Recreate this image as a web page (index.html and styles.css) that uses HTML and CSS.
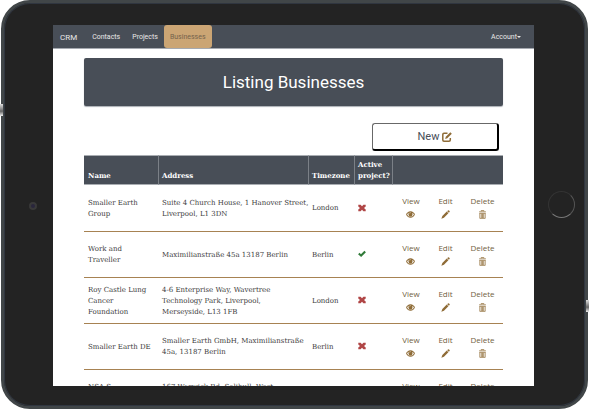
FILE: index.html
```html
<!DOCTYPE html>
<html lang="en">
<head>
<meta charset="utf-8">
<meta name="viewport" content="width=device-width">
<title>Listing Businesses</title>
<link rel="stylesheet" href="styles.css">
</head>
<body>
<svg class="symbols" aria-hidden="true">
  <symbol id="eye" viewBox="0 0 10 8"><path d="M5 .3C2.600 .3 .9 2 .1 4 .9 6 2.600 7.700 5 7.700S9.100 6 9.900 4C9.100 2 7.400 .3 5 .3Z"/><path fill="#fff" d="M1.200 4Q2 2.500 2.900 2Q2.400 4 3.300 5.600Q5 6.700 6.700 5.600Q7.600 4 7.100 2Q8 2.500 8.800 4Q7.500 6.500 5 6.500T1.200 4Z"/><path fill="#fff" d="M3.800 2.700Q4.200 1.700 5 1.600V2.300Q4.400 2.500 4.200 3Z"/></symbol>
  <symbol id="pencil" viewBox="0 0 10 10"><path d="M7.700 .5Q8.300 0 8.900 .5L9.500 1.100Q10 1.700 9.500 2.300L8.700 3.100 6.900 1.300ZM6.400 1.800 8.200 3.600 3.300 8.500 .4 9.600 1.500 6.700Z"/></symbol>
  <symbol id="trash" viewBox="0 0 8 10"><path fill="none" stroke="currentColor" d="M2.500 1.500V.6H5.500V1.500M.2 2H7.800M1 3.500V9.300H7V3.500M.7 3.700H7.300M2.700 4V9M4 4V9M5.300 4V9" stroke-width=".8"/></symbol>
  <symbol id="cross" viewBox="0 0 8 8"><path d="M.3 .7H2.600L4 2.200 5.400 .7H7.700V2.500L6 4 7.700 5.500V7.300H5.400L4 5.800 2.600 7.300H.3V5.500L2 4 .3 2.500Z"/></symbol>
  <symbol id="tick" viewBox="0 0 9 8"><path d="M.1 4.400 1.800 2.700 3.300 4.200 7.200 .4 8.900 2 3.500 7.500Z"/></symbol>
  <symbol id="compose" viewBox="0 0 10 10"><path fill="none" stroke="currentColor" stroke-width="1.500" d="M5.500 1.200H2Q.8 1.200 .8 2.400V8Q.8 9.200 2 9.200H7Q8.300 9.200 8.300 8V6"/><path d="M8.300 .2 9.800 1.700 5.300 6.300 3.200 6.900 3.800 4.700Z"/></symbol>
</svg>
<div class="tablet">
  <span class="camera"></span>
  <div class="screen">
    <nav class="navbar">
      <a class="brand" href="#">CRM</a>
      <a class="nav-link" href="#">Contacts</a>
      <a class="nav-link" href="#">Projects</a>
      <a class="nav-link active" href="#">Businesses</a>
      <button class="account" type="button">Account<span class="caret"></span></button>
    </nav>
    <main class="content">
      <h1 class="banner">Listing Businesses</h1>
      <div class="toolbar"><button class="new" type="button">New <svg class="icon-new"><use href="#compose"/></svg></button></div>
      <table class="businesses">
        <colgroup><col class="col-name"><col><col class="col-zone"><col class="col-active"><col class="col-view"><col class="col-edit"><col class="col-delete"></colgroup>
        <thead><tr><th>Name</th><th>Address</th><th>Timezone</th><th>Active<br>project?</th><th colspan="3"></th></tr></thead>
        <tbody>
          <tr><td>Smaller Earth<br>Group</td><td>Suite 4 Church House, 1 Hanover Street,<br>Liverpool, L1 3DN</td><td>London</td><td><svg class="status no" role="img" aria-label="No"><use href="#cross"/></svg></td>
            <td><a class="action" href="#">View<svg><use href="#eye"/></svg></a></td><td><a class="action" href="#">Edit<svg><use href="#pencil"/></svg></a></td><td><a class="action" href="#">Delete<svg><use href="#trash"/></svg></a></td></tr>
          <tr><td>Work and<br>Traveller</td><td>Maximilianstraße 45a 13187 Berlin</td><td>Berlin</td><td><svg class="status yes" role="img" aria-label="Yes"><use href="#tick"/></svg></td>
            <td><a class="action" href="#">View<svg><use href="#eye"/></svg></a></td><td><a class="action" href="#">Edit<svg><use href="#pencil"/></svg></a></td><td><a class="action" href="#">Delete<svg><use href="#trash"/></svg></a></td></tr>
          <tr><td>Roy Castle Lung<br>Cancer<br>Foundation</td><td>4-6 Enterprise Way, Wavertree<br>Technology Park, Liverpool,<br>Merseyside, L13 1FB</td><td>London</td><td><svg class="status no" role="img" aria-label="No"><use href="#cross"/></svg></td>
            <td><a class="action" href="#">View<svg><use href="#eye"/></svg></a></td><td><a class="action" href="#">Edit<svg><use href="#pencil"/></svg></a></td><td><a class="action" href="#">Delete<svg><use href="#trash"/></svg></a></td></tr>
          <tr><td>Smaller Earth DE</td><td>Smaller Earth GmbH, Maximilianstraße<br>45a, 13187 Berlin</td><td>Berlin</td><td><svg class="status no" role="img" aria-label="No"><use href="#cross"/></svg></td>
            <td><a class="action" href="#">View<svg><use href="#eye"/></svg></a></td><td><a class="action" href="#">Edit<svg><use href="#pencil"/></svg></a></td><td><a class="action" href="#">Delete<svg><use href="#trash"/></svg></a></td></tr>
          <tr><td>NSA S<br>&nbsp;</td><td>167 Warwick Rd, Solihull, West<br>&nbsp;</td><td></td><td></td>
            <td><a class="action" href="#">View<svg><use href="#eye"/></svg></a></td><td><a class="action" href="#">Edit<svg><use href="#pencil"/></svg></a></td><td><a class="action" href="#">Delete<svg><use href="#trash"/></svg></a></td></tr>
        </tbody>
      </table>
    </main>
  </div>
  <span class="home"></span>
  <span class="side-key left"></span>
  <span class="side-key right"></span>
</div>
</body>
</html>
```
FILE: styles.css
```css
* { box-sizing: border-box; }
body { margin: 0; background: #fff; font-family: Roboto, sans-serif; }
.symbols { position: absolute; width: 0; height: 0; }

.tablet {
  position: relative;
  display: grid;
  grid-template-columns: 49px 1fr 51px;
  align-items: center;
  height: 100vh;
  margin-right: 1px;
  margin-left: 1px;
  padding: 22px 0 20px;
  border: 3px solid #414648;
  border-radius: 29px;
  background: #232323;
  box-shadow: inset 0 0 0 1px #303640;
}
.camera { width: 8px; height: 8px; margin-left: 25px; border: 2px solid #393939; border-radius: 50%; background: #29263c; }
.home {
  justify-self: center;
  width: 27px;
  height: 27px;
  margin: 0 0 3px 3px;
  border: 1px solid;
  border-color: #333 #555 #777 #333;
  border-radius: 50%;
}
.side-key { position: absolute; width: 3px; height: 12px; background: linear-gradient(#ddd, #666 60%, #eee); }
.side-key.left { left: -4px; top: 101px; }
.side-key.right { right: -4px; bottom: 94px; }

.screen { align-self: stretch; min-height: 0; overflow: hidden; background: #fff; }

.navbar {
  display: flex;
  align-items: stretch;
  height: 24px;
  padding-right: 13px;
  border-bottom: 1px solid #a5a9b0;
  background: #484e57;
  font-size: 7px;
  line-height: 24px;
}
.navbar a, .account { color: #e8e8e8; text-decoration: none; }
.brand { padding: 1px 9px 0 7px; font-size: 8px; }
.nav-link { padding: 0 6px; }
.nav-link.active { border-radius: 3px; background: #cba574; color: #75634c; }
.account { display: flex; align-items: center; margin-left: auto; padding: 0; border: 0; background: none; font: inherit; }
.caret { border: 2px solid transparent; border-top-color: currentColor; border-bottom: 0; }

.content { padding: 9px 31px 0; }
.banner {
  margin: 0;
  border-radius: 2px;
  background: #484e57;
  box-shadow: 0 1px 1px #aaaeb4;
  color: #fff;
  font-size: 17px;
  font-weight: 400;
  line-height: 48px;
  text-align: center;
}
.toolbar { display: flex; justify-content: flex-end; padding: 17px 4px 4px 0; }
.new {
  display: flex;
  align-items: center;
  justify-content: center;
  gap: 3px;
  width: 127px;
  height: 28px;
  padding: 0;
  border: 1px solid #686868;
  border-right: 2px solid #000;
  border-bottom: 2px solid #000;
  border-radius: 3px;
  background: #fff;
  color: #484e57;
  font: 11px Roboto, sans-serif;
}
.icon-new { width: 10px; height: 10px; color: #8f6c37; fill: currentColor; }

.businesses {
  width: 100%;
  border-collapse: separate;
  border-spacing: 0;
  table-layout: fixed;
  color: #3c3c3c;
  font-family: "DejaVu Serif", serif;
  font-size: 7px;
  line-height: 11px;
  white-space: nowrap;
}
.col-name { width: 74px; }
.col-zone { width: 46px; }
.col-active { width: 38px; }
.col-view { width: 37px; }
.col-edit { width: 32px; }
.col-delete { width: 42px; }
.businesses th {
  height: 30px;
  padding: 0 0 3px 3px;
  border-top: 1px solid #a9adb2;
  border-bottom: 1px solid #a9adb2;
  border-left: 1px solid #7b8087;
  background: #484e57;
  color: #fff;
  text-align: left;
  vertical-align: bottom;
}
.businesses th:first-child { padding-left: 4px; border-left: 0; }
.businesses td { height: 46px; padding: 1px 0 0 4px; border-bottom: 1px solid #a78252; }
.businesses tbody tr:first-child td { height: 47px; }
.status { display: block; width: 8px; height: 8px; margin-bottom: 2px; }
.no { fill: #b04646; }
.yes { fill: #307a38; }
.action {
  display: flex;
  flex-direction: column;
  align-items: center;
  gap: 4px;
  margin: 0 3px 2px 0;
  color: #725f43;
  font-family: "Open Sans", sans-serif;
  font-size: 8px;
  line-height: 10px;
  text-decoration: none;
}
.action svg { width: 9px; height: 9px; color: #8f6c37; fill: currentColor; }
```
